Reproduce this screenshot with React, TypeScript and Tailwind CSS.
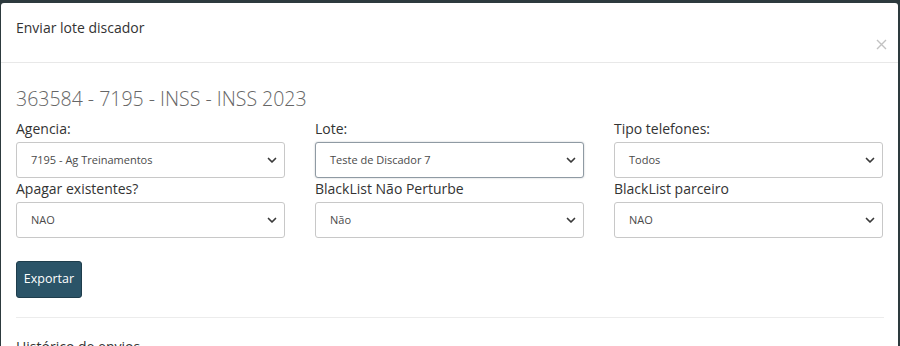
import React from "react";

function Chevron() {
  return (
    <svg width="10" height="7" viewBox="0 0 10 7" className="shrink-0">
      <path d="M1.5 1.5 L5 5 L8.5 1.5" fill="none" stroke="#3a3a3a" strokeWidth="1.7" strokeLinecap="round" strokeLinejoin="round" />
    </svg>
  );
}

function Field({ label, value, focus }: { label: string; value: string; focus?: boolean }) {
  return (
    <div className="flex flex-col">
      <label className="text-[14px] leading-[20px] text-[#333] h-[20px] mb-[3px]">{label}</label>
      <div
        className={
          "h-[36px] rounded-[3px] bg-white flex items-center justify-between pl-[14px] pr-[7px] border " +
          (focus ? "border-[#8f9aa3] shadow-[0_0_2px_rgba(100,110,120,0.4)]" : "border-[#c8c8c8]")
        }
      >
        <span className="text-[11px] text-[#4a4a4a]">{value}</span>
        <Chevron />
      </div>
    </div>
  );
}

export default function App() {
  return (
    <div className="w-[900px] h-[346px] bg-[#2d3a3e] overflow-hidden pt-[3px] pl-[1px] pr-[2px]" style={{ fontFamily: '"Open Sans", "Noto Sans", sans-serif' }}>
      <div className="bg-white h-[400px] rounded-t-[3px]">
        <div className="h-[60px] border-b border-[#e8e8e8] flex justify-between pl-[15px] pr-[11px]">
          <div className="pt-[15px] text-[14px] leading-[20px] text-[#333]">Enviar lote discador</div>
          <div className="pt-[36px]">
            <svg width="11" height="11" viewBox="0 0 11 11">
              <path d="M1 1 L10 10 M10 1 L1 10" stroke="#c2c2c2" strokeWidth="1.4" />
            </svg>
          </div>
        </div>
        <div className="px-[15px]">
          <div className="mt-[25px] text-[19.5px] leading-[22px] font-light text-[#666]">363584 - 7195 - INSS - INSS 2023</div>
          <div className="mt-[9px] grid grid-cols-3 gap-x-[30px] gap-y-[1px] w-[867px]">
            <Field label="Agencia:" value="7195 - Ag Treinamentos" />
            <Field label="Lote:" value="Teste de Discador 7" focus />
            <Field label="Tipo telefones:" value="Todos" />
            <Field label="Apagar existentes?" value="NAO" />
            <Field label="BlackList Não Perturbe" value="Não" />
            <Field label="BlackList parceiro" value="NAO" />
          </div>
          <button className="mt-[23px] h-[37px] w-[66px] rounded-[3px] bg-[#2b5468] border border-[#1e3d4c] text-white text-[12.5px]">Exportar</button>
          <div className="mt-[19px] border-t border-[#ececec] w-[868px]"></div>
          <div className="mt-[18px] text-[14px] text-[#333]">Histórico de envios</div>
        </div>
      </div>
    </div>
  );
}
